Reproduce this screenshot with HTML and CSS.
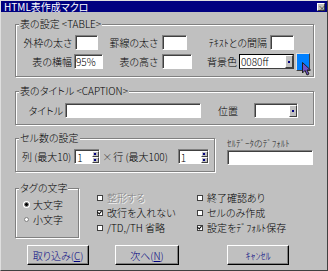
FILE: index.html
```html
<!DOCTYPE html>
<html lang="ja">
<head>
    <meta charset="UTF-8">
    <title>HTML表作成マクロ</title>
    <link rel="stylesheet" href="styles.css">
</head>
<body>
    <div class="win">
        <div class="titlebar">
            <span class="title">HTML表作成マクロ</span>
            <span class="close">×</span>
        </div>

        <fieldset class="group g-table">
            <legend>表の設定 &lt;TABLE&gt;</legend>
            <div class="row r1">
                <span class="lbl" style="width:56px">外枠の太さ</span>
                <input class="field" style="width:23px" value="">
                <span class="lbl" style="width:60px">罫線の太さ</span>
                <input class="field" style="width:25px" value="">
                <span class="lbl" style="width:80px">ﾃｷｽﾄとの間隔</span>
                <input class="field" style="width:24px" value="">
            </div>
            <div class="row r2">
                <span class="lbl" style="width:56px">表の横幅</span>
                <input class="field" style="width:29px" value="95%">
                <span class="lbl" style="width:55px">表の高さ</span>
                <input class="field" style="width:30px" value="">
                <span class="lbl" style="width:45px">背景色</span>
                <div class="combo dark" style="width:55px">
                    <span class="val">0080ff</span>
                    <span class="drop"><i></i></span>
                </div>
                <span class="swatch"></span>
            </div>
        </fieldset>

        <fieldset class="group g-caption">
            <legend>表のタイトル &lt;CAPTION&gt;</legend>
            <div class="row r3">
                <span class="lbl" style="width:47px">タイトル</span>
                <input class="field" style="width:136px" value="">
                <span class="lbl" style="width:37px">位置</span>
                <div class="combo" style="width:44px;margin-left:16px">
                    <span class="val"></span>
                    <span class="drop"><i></i></span>
                </div>
            </div>
        </fieldset>

        <div class="cells">
            <fieldset class="group g-cells">
                <legend>セル数の設定</legend>
                <div class="row r4">
                    <span class="cnt first">列 (最大10)</span>
                    <div class="spin" style="width:26px">
                        <span class="val">1</span>
                        <span class="arrows"><b class="up"></b><b class="dn"></b></span>
                    </div>
                    <span class="times">×</span>
                    <span class="cnt second">行 (最大100)</span>
                    <div class="spin" style="width:31px">
                        <span class="val">1</span>
                        <span class="arrows"><b class="up"></b><b class="dn"></b></span>
                    </div>
                </div>
            </fieldset>
            <div class="celldef">
                <div class="small">ｾﾙﾃﾞｰﾀのﾃﾞﾌｫﾙﾄ</div>
                <input class="field" style="width:86px" value="">
            </div>
        </div>

        <div class="options">
            <fieldset class="group g-tag">
                <legend>タグの文字</legend>
                <div class="radio on"><i></i>大文字</div>
                <div class="radio"><i></i>小文字</div>
            </fieldset>
            <div class="checks c1">
                <div class="check off"><i></i>整形する</div>
                <div class="check checked"><i></i>改行を入れない</div>
                <div class="check"><i></i>/TD,/TH 省略</div>
            </div>
            <div class="checks c2">
                <div class="check"><i></i>終了確認あり</div>
                <div class="check"><i></i>セルのみ作成</div>
                <div class="check checked"><i></i>設定をﾃﾞﾌｫﾙﾄ保存</div>
            </div>
        </div>

        <div class="buttons">
            <button class="btn b1">取り込み(<u>C</u>)</button>
            <button class="btn b2">次へ(<u>N</u>)</button>
            <button class="btn b3">ｷｬﾝｾﾙ</button>
        </div>

        <svg class="cursor" width="11" height="14" viewBox="0 0 11 14">
            <path d="M0.5 0.5 L0.5 11 L3 8.5 L5 13 L7 12 L5 8 L8.5 8 Z" fill="#7050c8" stroke="#202020" stroke-width="1"/>
        </svg>
    </div>
</body>
</html>
```

FILE: styles.css
```css
*{
    box-sizing: border-box;
}
body{
    margin:0;
    background:#c0c0c0;
    font-family: "Noto Sans CJK JP", sans-serif;
    font-size:10px;
    font-weight:300;
    font-feature-settings: "palt";
    color:#000;
}
.win{
    position:relative;
    width:328px;
    height:271px;
    background:#c0c0c0;
    border:1px solid;
    border-color:#dfdfdf #404040 #404040 #dfdfdf;
    overflow:hidden;
}
.titlebar{
    height:11px;
    background:#000080;
    color:#fff;
    display:flex;
    align-items:center;
    justify-content:space-between;
    padding:0 2px 0 3px;
}
.title{
    font-size:10px;
    line-height:11px;
    font-weight:400;
}
.close{
    width:8px;
    height:8px;
    background:#c0c0c0;
    color:#000;
    font-size:8px;
    line-height:7px;
    text-align:center;
    border:1px solid;
    border-color:#fff #404040 #404040 #fff;
}

/* group boxes */
.group{
    margin:0;
    padding:0;
    min-inline-size:0;
    border:1px solid #808080;
    box-shadow: inset 1px 1px #fff, 1px 1px #fff;
}
.group legend{
    margin-left:3px;
    padding:0 1px;
    line-height:12px;
    background:#c0c0c0;
}
.g-table{
    margin:6px 0 0 14px;
    width:299px;
    padding-bottom:7px;
}
.g-caption{
    margin:8px 0 0 14px;
    width:299px;
    padding-bottom:6px;
}
.row{
    display:flex;
    align-items:center;
    height:15px;
}
.r1{ margin-top:5px; }
.r2{ margin-top:4px; }
.r3{ margin-top:6px; }
.r4{ margin-top:5px; }
.lbl{
    flex:none;
    text-align:right;
    white-space:nowrap;
    margin-right:3px;
    line-height:15px;
}
.r1 .lbl:nth-of-type(2){ margin-right:4px; }
.r2 .lbl:first-child{ margin-right:2px; }
.r2 .lbl:nth-of-type(2){ margin-right:4px; }
.r2 .lbl:nth-of-type(3){ margin-right:2px; }
.r3 .lbl:first-child{ margin-right:2px; }
.r3 .lbl:nth-of-type(2){ margin-right:0; }

.cnt{
    flex:none;
    white-space:nowrap;
    line-height:15px;
}
.cnt.first{
    margin:0 3px 0 6px;
}
.cnt.second{
    margin:0 10px 0 3px;
}

.field{
    flex:none;
    height:15px;
    margin:0;
    padding:0 1px;
    font:inherit;
    line-height:13px;
    color:#000;
    background:#fff;
    border:1px solid;
    border-color:#808080 #fff #fff #808080;
    box-shadow: inset 1px 1px #404040;
    outline:none;
}
.combo, .spin{
    flex:none;
    display:flex;
    height:15px;
    background:#fff;
    border:1px solid;
    border-color:#808080 #fff #fff #808080;
    box-shadow: inset 1px 1px #404040;
    padding:1px 0 0 1px;
}
.combo.dark{
    border-color:#000 #404040 #404040 #000;
    box-shadow:none;
    padding:0;
}
.val{
    flex:1;
    line-height:13px;
    padding-left:1px;
    white-space:nowrap;
}
.drop{
    flex:none;
    width:8px;
    background:#c0c0c0;
    border:1px solid;
    border-color:#fff #404040 #404040 #fff;
    display:flex;
    align-items:center;
    justify-content:center;
}
.drop i{
    width:2px;
    height:2px;
    background:#000080;
}
.swatch{
    flex:none;
    width:14px;
    height:18px;
    margin-left:2px;
    background:#0080ff;
    border:1px solid;
    border-color:#dfdfdf #404040 #404040 #dfdfdf;
}

/* cell count */
.cells{
    display:flex;
    align-items:flex-start;
    margin:7px 0 0 14px;
}
.g-cells{
    width:200px;
    padding-bottom:7px;
}
.arrows{
    flex:none;
    width:7px;
    display:flex;
    flex-direction:column;
}
.arrows b{
    flex:1;
    background:#c0c0c0;
    border:1px solid;
    border-color:#fff #404040 #404040 #fff;
    position:relative;
}
.arrows b::after{
    content:"";
    position:absolute;
    left:1px;
    top:1px;
    width:2px;
    height:2px;
    background:#000080;
}
.times{
    width:8px;
    text-align:center;
    color:#404040;
    margin-left:2px;
}
.celldef{
    margin-left:12px;
    padding-top:6px;
}
.small{
    font-size:9px;
    line-height:12px;
    height:12px;
    color:#202020;
}

/* options */
.options{
    display:flex;
    align-items:flex-start;
    margin:10px 0 0 14px;
}
.g-tag{
    width:64px;
    padding:3px 0 10px 0;
}
.radio, .check{
    display:flex;
    align-items:center;
    height:15px;
    white-space:nowrap;
}
.radio i{
    width:5px;
    height:5px;
    border-radius:50%;
    background:#fff;
    border:1px solid #808080;
    margin:0 4px 0 8px;
}
.radio.on i{
    background:#000;
    box-shadow:0 0 0 1px #fff;
}
.checks{
    padding-top:8px;
}
.c1{ margin-left:18px; width:100px; }
.c2{ margin-left:0; }
.check i{
    width:6px;
    height:6px;
    background:#fff;
    border:1px solid #404040;
    margin-right:4px;
    position:relative;
}
.check.checked i::after{
    content:"";
    position:absolute;
    left:0;
    top:-1px;
    width:2px;
    height:3px;
    border:solid #000;
    border-width:0 1px 1px 0;
    transform:rotate(40deg);
}
.check.off{
    color:#808080;
    text-shadow:1px 1px #fff;
}

/* buttons */
.buttons{
    display:flex;
    margin:7px 0 0 26px;
}
.btn{
    height:20px;
    padding:0;
    font:inherit;
    color:#000080;
    background:#c0c0c0;
    border:1px solid;
    border-color:#fff #000 #000 #fff;
    box-shadow: inset -1px -1px #808080;
}
.b1{ width:62px; }
.b2{ width:64px; margin-left:26px; }
.b3{ width:62px; margin-left:48px; }

.cursor{
    position:absolute;
    left:301px;
    top:61px;
}
```
